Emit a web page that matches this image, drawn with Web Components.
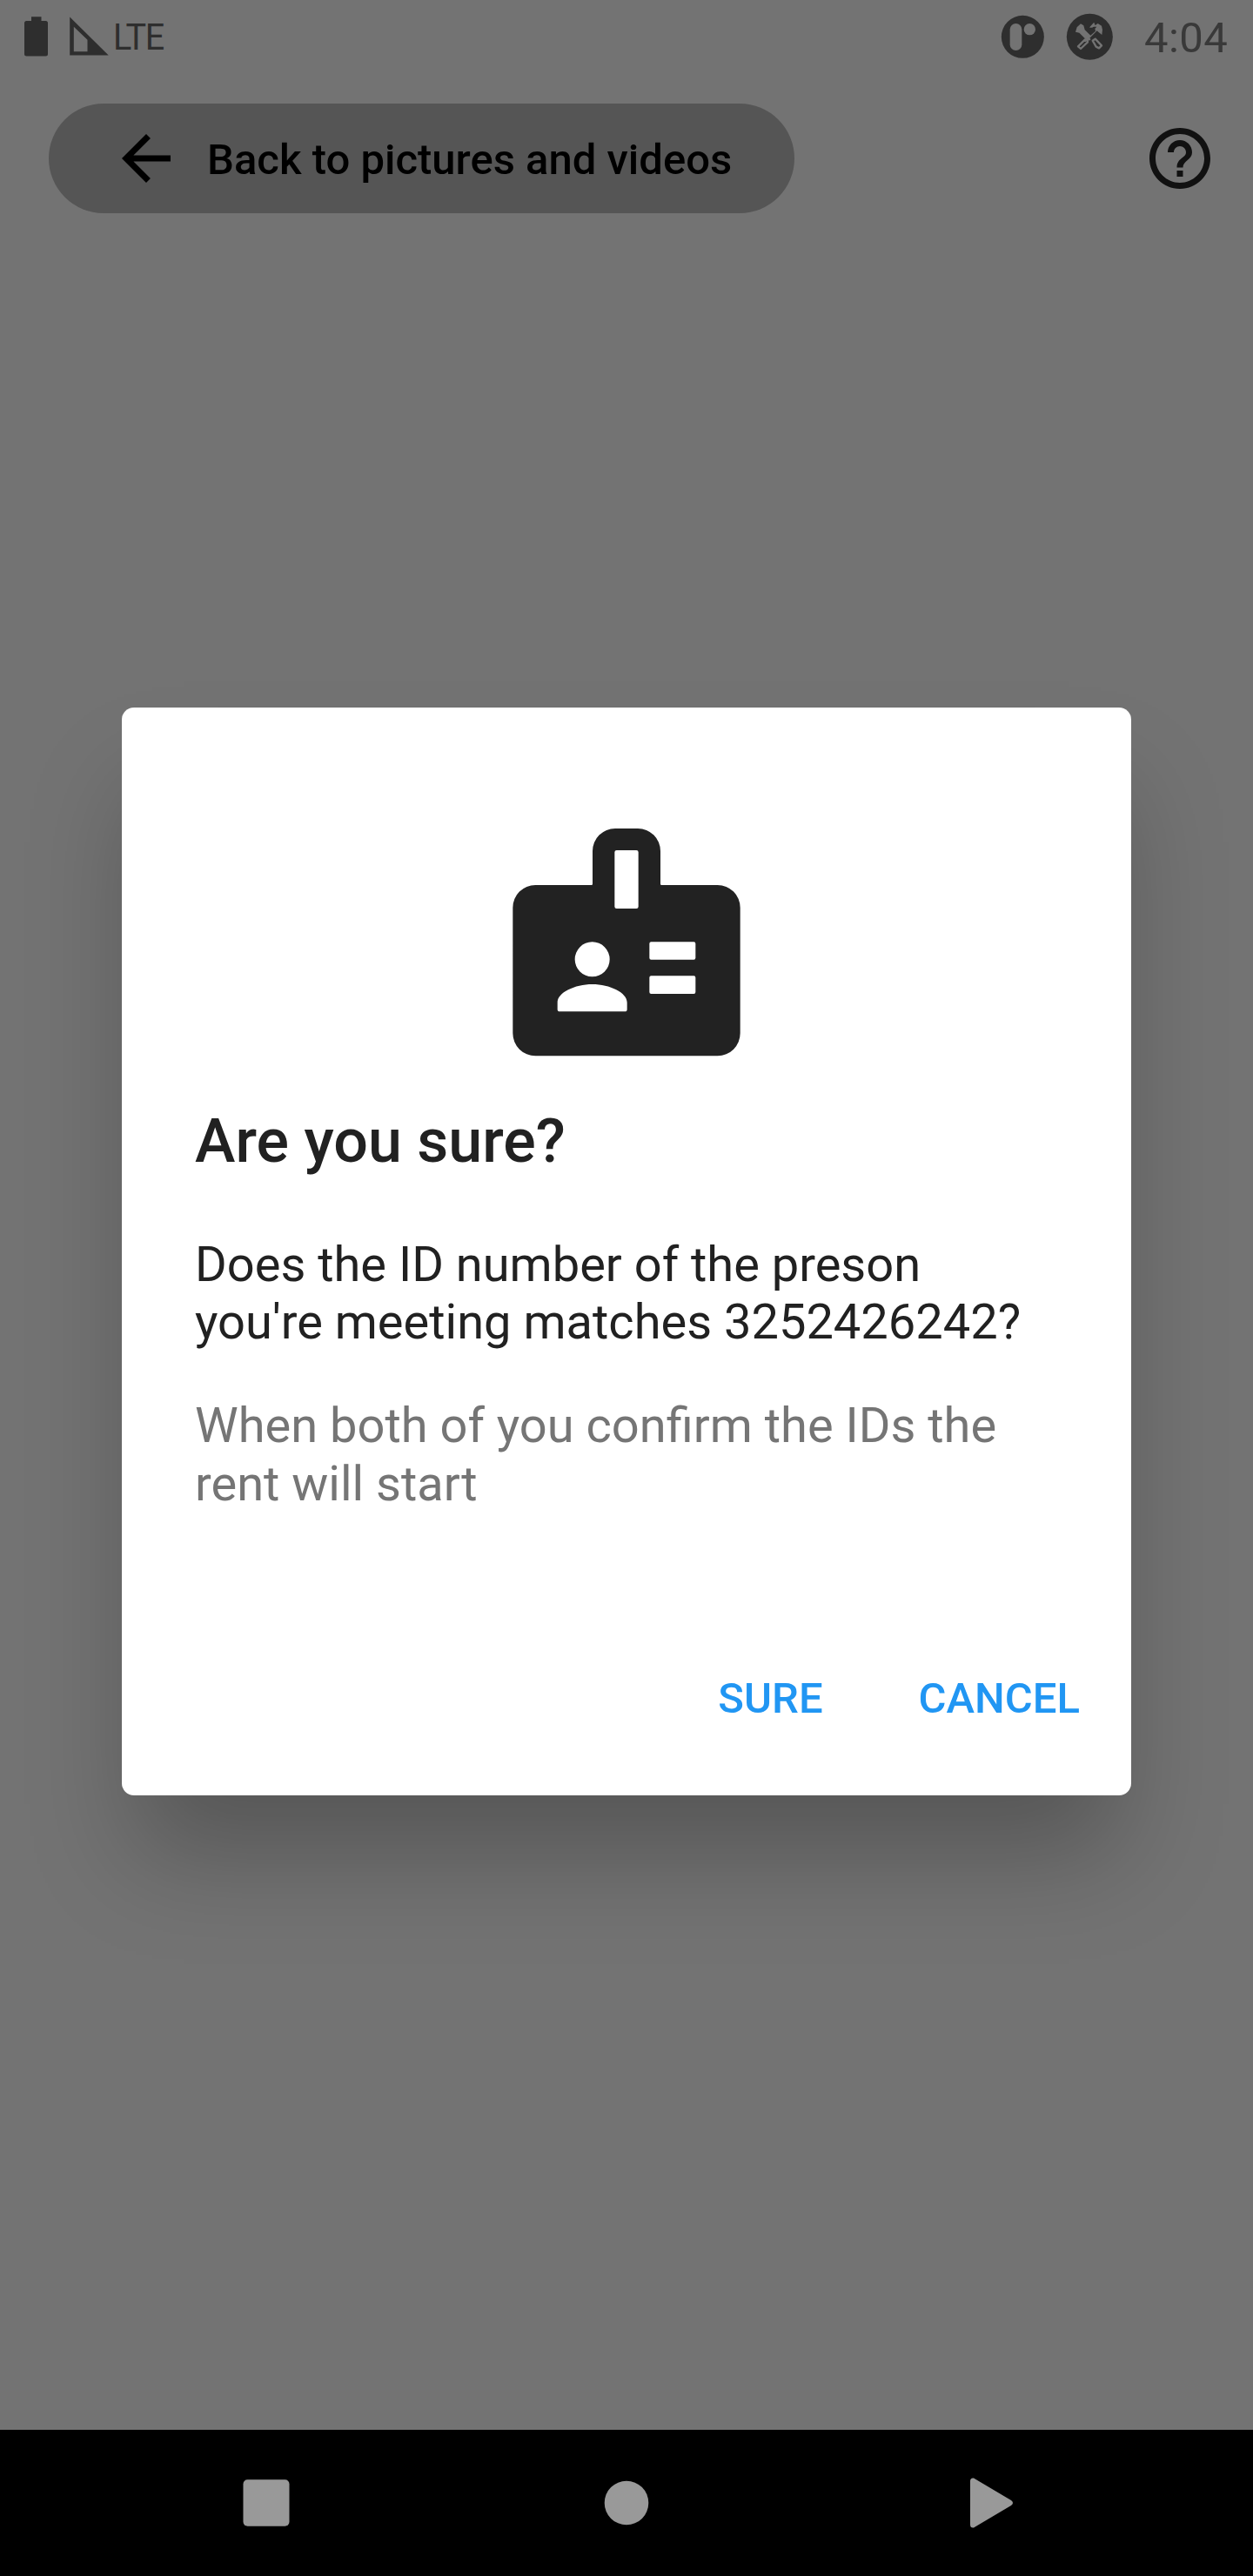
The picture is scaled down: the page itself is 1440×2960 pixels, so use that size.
<!DOCTYPE html>
<html lang="en">
<head>
<meta charset="utf-8">
<title>Confirm ID</title>
<style>
html,body{margin:0;padding:0;background:#737373}
body{font-family:Roboto,"Liberation Sans",sans-serif}
</style>
</head>
<body>
<rent-screen></rent-screen>
<script>
const define = (name, css, html) => customElements.define(name, class extends HTMLElement {
  constructor() {
    super();
    this.attachShadow({mode: 'open'}).innerHTML = `<style>${css}</style>${html}`;
  }
});

define('status-bar', `
  :host{display:flex;height:84px;align-items:flex-start;color:#2e2e2e}
  svg{display:block;flex:none}
  .lte{width:60px;margin-top:16px;font-size:43px;line-height:52px;letter-spacing:-1.5px;transform:scaleX(.92);transform-origin:0 0;white-space:nowrap}
  .gap{flex:1}
  .clock{width:125px;margin-top:15px;font-size:49px;line-height:58px;letter-spacing:.4px;color:#393939;white-space:nowrap}
`, `
  <svg width="130" height="84" viewBox="0 0 130 84" fill="currentColor">
    <path d="M36 19.3h11.500V24H52.500a2.500 2.500 0 0 1 2.500 2.500V62a2.500 2.500 0 0 1-2.500 2.500h-22A2.500 2.500 0 0 1 28 62V26.500A2.500 2.500 0 0 1 30.500 24H36z"/>
    <path fill-rule="evenodd" d="M80.200 19.500L124.700 63.500H80.200zM84.800 30.700V59.300H100.500V45.700z"/>
  </svg>
  <span class="lte">LTE</span>
  <span class="gap"></span>
  <svg width="195" height="84" viewBox="0 0 585 252">
    <g fill="#2e2e2e"><circle cx="166" cy="127" r="73.500"/><circle cx="397" cy="127" r="79.500"/></g>
    <g fill="#737373">
      <rect x="122" y="81" width="41" height="93" rx="20.500"/><circle cx="190" cy="101" r="20"/>
      <path d="M353 94l13-12 10 6 4 15 20 19 17-15-2-8 6-7h-9l-15 4 1-4 13-14 5 9 9-6 13 8 3 14-2 17-12-10-5-4-8 8-17 17 4 4-5 5-5-3-7 7h-9l8-9-22-22-13-3z"/>
      <path d="M399 93l14-15v8l-7 9z"/>
    </g>
    <g fill="none" stroke="#737373" stroke-width="7" stroke-linejoin="round">
      <path d="M357 160l24-24h8l1 9-24 23zM407 140l9-6 22 23-9 9-10-5z"/>
    </g>
  </svg>
  <span class="clock">4:04</span>
`);

define('back-button', `
  :host{display:flex;align-items:center;box-sizing:border-box;width:857px;height:126px;border-radius:63px;background:#555;color:#000;padding-left:70px;gap:28px;font-size:49px;font-weight:500;line-height:58px;white-space:nowrap}
  svg{display:block;flex:none}
  span{padding-top:4px}
`, `
  <svg width="84" height="84" viewBox="0 0 24 24"><path d="M20 11H7.830l5.590-5.590L12 4l-8 8 8 8 1.410-1.410L7.830 13H20v-2z"/></svg>
  <span><slot></slot></span>
`);

define('top-bar', `
  :host{display:flex;height:126px;margin-top:35px;padding:0 42px 0 56px;justify-content:space-between;align-items:center}
  svg{display:block}
`, `
  <back-button>Back to pictures and videos</back-button>
  <svg width="84" height="84" viewBox="0 0 24 24" fill="#111"><path d="M11 18h2v-2h-2v2zm1-16C6.480 2 2 6.480 2 12s4.480 10 10 10 10-4.480 10-10S17.520 2 12 2zm0 18c-4.410 0-8-3.590-8-8s3.590-8 8-8 8 3.590 8 8-3.590 8-8 8zm0-14c-2.210 0-4 1.790-4 4h2c0-1.100.9-2 2-2s2 .9 2 2c0 2-3 1.750-3 5h2c0-2.250 3-2.500 3-5 0-2.210-1.790-4-4-4z"/></svg>
`);

define('text-button', `
  :host{display:block;font-size:49px;font-weight:500;line-height:58px;color:#2196f3;white-space:nowrap}
`, `<slot></slot>`);

define('confirm-dialog', `
  :host{display:flex;flex-direction:column;box-sizing:border-box;width:1160px;height:1249.5px;padding:117px 59px 0 84px;border-radius:14px;background:#fff;box-shadow:0 82px 112px -16px rgba(0,0,0,.25);color:#212121}
  svg{display:block;flex:none;margin-left:346px}
  h1{margin:40px 0 0;font-size:70px;line-height:82px;font-weight:500}
  p{margin:68px 0 0;font-size:56px;line-height:66px;white-space:nowrap}
  p.note{margin-top:53px;line-height:67px;color:#757575}
  .actions{display:flex;justify-content:flex-end;gap:110px;margin-top:184px}
`, `
  <svg width="300" height="300" viewBox="0 0 900 900" fill="#222">
    <path fill-rule="evenodd" d="M136 261H329q4 0 4-4V144a78 78 0 0 1 78-78h78a78 78 0 0 1 78 78V257q0 4 4 4H764a78 78 0 0 1 78 78V772a78 78 0 0 1-78 78H136a78 78 0 0 1-78-78V339a78 78 0 0 1 78-78z
    M416 141q-7 0-7 7V335q0 7 7 7H484q7 0 7-7V148q0-7-7-7z
    M535 457q-6 0-6 6V512q0 6 6 6H682q6 0 6-6V463q0-6-6-6z
    M535 574q-6 0-6 6V630q0 6 6 6H682q6 0 6-6V580q0-6-6-6z
    M332 457a60 60 0 1 0 0 120a60 60 0 1 0 0-120z
    M332 603C271 603 212 632 212 666V689q0 8 8 8H444q8 0 8-8V666C452 632 393 603 332 603z"/>
  </svg>
  <h1>Are you sure?</h1>
  <p>Does the ID number of the preson<br>you're meeting matches 3252426242?</p>
  <p class="note">When both of you confirm the IDs the<br>rent will start</p>
  <div class="actions"><text-button>SURE</text-button><text-button>CANCEL</text-button></div>
`);

define('nav-bar', `
  :host{display:flex;height:168px;background:#000;justify-content:space-between;align-items:center;box-sizing:border-box;padding:0 264px}
  svg{display:block}
`, `
  <svg width="84" height="84" viewBox="0 0 84 84" fill="#999"><rect x="15.500" y="15.300" width="53" height="53.500" rx="5"/></svg>
  <svg width="84" height="84" viewBox="0 0 84 84"><circle cx="42" cy="42" r="25.300" fill="#999"/></svg>
  <svg width="84" height="84" viewBox="0 0 84 84"><path d="M23 17q0-4 4-3.500L70 39q4 3 0 6L27 70.500q-4 .5-4-3.500z" fill="#999"/></svg>
`);

define('rent-screen', `
  :host{display:flex;flex-direction:column;width:1440px;height:2960px;background:#737373;overflow:hidden}
  main{flex:1;display:flex;flex-direction:column;align-items:center;padding-top:568px}
`, `
  <status-bar></status-bar>
  <top-bar></top-bar>
  <main><confirm-dialog></confirm-dialog></main>
  <nav-bar></nav-bar>
`);
</script>
</body>
</html>
